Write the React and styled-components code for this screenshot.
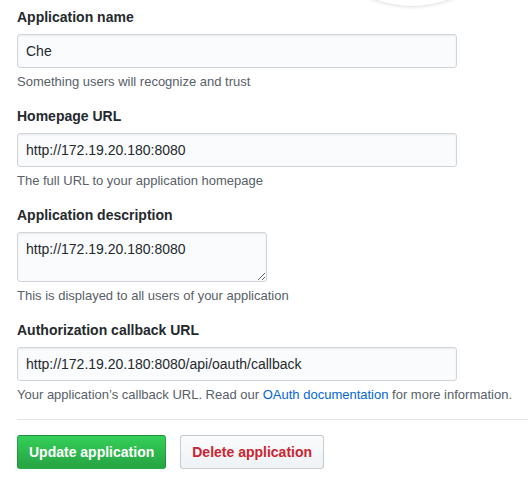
import React from "react";
import styled, { createGlobalStyle } from "styled-components";

const GlobalStyle = createGlobalStyle`
  html, body {
    margin: 0;
    padding: 0;
    background: #fff;
  }
  body {
    font-family: "Liberation Sans", Arial, sans-serif;
    font-size: 14px;
    color: #24292e;
  }
`;

const fields = [
  {
    label: "Application name",
    value: "Che",
    note: "Something users will recognize and trust",
  },
  {
    label: "Homepage URL",
    value: "http://172.19.20.180:8080",
    note: "The full URL to your application homepage",
  },
  {
    label: "Application description",
    value: "http://172.19.20.180:8080",
    note: "This is displayed to all users of your application",
    multiline: true,
  },
];

const App = () => {
  return (
    <Page>
      <GlobalStyle />
      <LogoPreview />
      <Form>
        {fields.map((f) => (
          <FormGroup key={f.label}>
            <Label>{f.label}</Label>
            {f.multiline ? (
              <TextArea defaultValue={f.value} />
            ) : (
              <Input defaultValue={f.value} />
            )}
            <Note>{f.note}</Note>
          </FormGroup>
        ))}
        <FormGroup>
          <Label>Authorization callback URL</Label>
          <Input defaultValue="http://172.19.20.180:8080/api/oauth/callback" />
          <Note>
            Your application’s callback URL. Read our{" "}
            <Link href="#">OAuth documentation</Link> for more information.
          </Note>
        </FormGroup>
        <Divider />
        <Actions>
          <Button variant="primary">Update application</Button>
          <Button variant="danger">Delete application</Button>
        </Actions>
      </Form>
    </Page>
  );
};

export default App;

const Page = styled.div`
  position: relative;
  width: 528px;
  height: 482px;
  overflow: hidden;
`;

// bottom edge of the logo preview circle from the section above
const LogoPreview = styled.div`
  position: absolute;
  left: 310px;
  top: -191px;
  width: 202px;
  height: 196px;
  border-radius: 50%;
  border: 1px solid #e6e8eb;
  box-shadow: 0 1px 3px rgba(27, 31, 35, 0.08);
  background: #fff;
`;

const Form = styled.form`
  display: flex;
  flex-direction: column;
  padding: 7px 0 0 17px;
`;

const FormGroup = styled.div`
  display: flex;
  flex-direction: column;
  align-items: flex-start;
  margin-bottom: 16px;
`;

const Label = styled.label`
  font-weight: bold;
  font-size: 14px;
  line-height: 21px;
  margin-bottom: 6px;
`;

const fieldBase = `
  box-sizing: border-box;
  font-family: "Liberation Sans", Arial, sans-serif;
  font-size: 14px;
  line-height: 20px;
  color: #24292e;
  background: #fafbfc;
  border: 1px solid #d1d5da;
  border-radius: 3px;
  box-shadow: inset 0 1px 2px rgba(27, 31, 35, 0.075);
  padding: 6px 8px;
  outline: none;
  margin: 0;
`;

const Input = styled.input`
  ${fieldBase}
  width: 440px;
  height: 34px;
`;

const TextArea = styled.textarea`
  ${fieldBase}
  width: 250px;
  height: 50px;
  resize: both;
  display: block;
`;

const Note = styled.p`
  margin: 5px 0 0;
  font-size: 13px;
  line-height: 17px;
  color: #586069;
`;

const Link = styled.a`
  color: #0366d6;
  text-decoration: none;
`;

const Divider = styled.hr`
  border: 0;
  border-top: 1px solid #e1e4e8;
  margin: 0 0 15px;
  height: 0;
  width: 100%;
`;

const Actions = styled.div`
  display: flex;
  gap: 14px;
`;

const Button = styled.button`
  box-sizing: border-box;
  height: 34px;
  padding: 6px 11px;
  font-family: "Liberation Sans", Arial, sans-serif;
  font-size: 14px;
  font-weight: bold;
  line-height: 20px;
  border-radius: 3px;
  border: 1px solid rgba(27, 31, 35, 0.2);
  cursor: pointer;
  color: ${(p) => (p.variant === "primary" ? "#fff" : "#cb2431")};
  background-image: ${(p) =>
    p.variant === "primary"
      ? "linear-gradient(-180deg, #34d058 0%, #28a745 90%)"
      : "linear-gradient(-180deg, #fafbfc 0%, #eff3f6 90%)"};
`;
